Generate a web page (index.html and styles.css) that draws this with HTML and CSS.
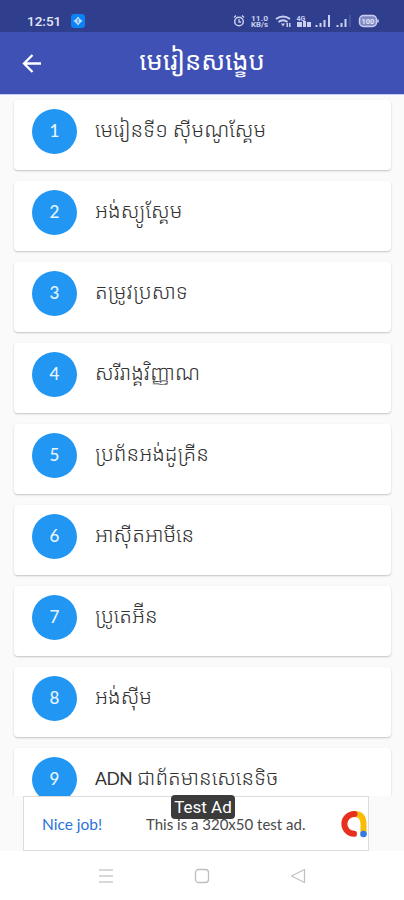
FILE: index.html
```html
<!DOCTYPE html>
<html lang="km">
<head>
<meta charset="UTF-8">
<meta name="viewport" content="width=device-width, initial-scale=1.0">
<title>មេរៀនសង្ខេប</title>
<link rel="stylesheet" href="styles.css">
</head>
<body>
  <div class="status-bar">
    <span class="clock">12:51</span>
    <svg class="app-badge" width="14" height="14" viewBox="0 0 14 14">
      <rect width="14" height="14" rx="3.5" fill="#0b83f7"/>
      <path d="M7 2.500 9 5l2.500 2L9 9l-2 2.500L5 9 2.500 7 5 5z" fill="#b9dcff"/>
      <path d="M7 5v4" stroke="#0b83f7"/>
    </svg>
    <svg class="status-icons" width="148" height="14" viewBox="0 0 148 14" fill="none" stroke="#c9cff0">
      <circle cx="7" cy="7.500" r="4.300" stroke-width="1.500"/>
      <path d="M7 5v3h2M2 3.500 4 1.500M12 3.500 10 1.500" stroke-width="1.300"/>
      <g fill="#c9cff0" stroke="none" class="tiny">
        <text x="19" y="6.500" textLength="17" lengthAdjust="spacingAndGlyphs">11.0</text>
        <text x="19" y="13" textLength="17" lengthAdjust="spacingAndGlyphs">KB/s</text>
        <text x="64.500" y="6.500">4G</text>
      </g>
      <path d="M44 5q7-5 14 0M46.500 8q4.500-3.500 9 0" stroke-width="2"/>
      <path d="m49 9.500 2 3 2-3zM54.500 9h1.500v4h-1.500zM57 9h1.500v4H57zM65 8h5v5h-5zM71 7h3v6h-3zM75 8h4v5h-4z" fill="#c9cff0" stroke="none"/>
      <path d="M84.500 13v-2M88.500 13V9M92.500 13V6M97 13V1" stroke-width="2"/>
      <path d="M105.500 13v-2M109.500 13V9M113.500 13V5" stroke-width="2"/>
      <path d="M118 13V1" stroke-width="1" opacity=".3"/>
      <rect x="127.500" y="1.500" width="17" height="11" rx="4" stroke-width="1.500" fill="#8089c2"/>
      <path d="M146 5.500v3" stroke-width="1.500"/>
      <text x="129.500" y="10" class="charge" fill="#e3e7fc" stroke="none">100</text>
    </svg>
  </div>

  <header class="toolbar">
    <button class="back" aria-label="Back">
      <svg width="20" height="20" viewBox="0 0 20 20" fill="none" stroke="#fff" stroke-width="2.300">
        <path d="M19 10.500H2.500M10.500 2 2 10.500l8.500 8.500"/>
      </svg>
    </button>
    <h1>មេរៀនសង្ខេប</h1>
  </header>

  <main class="lessons">
    <a class="card"><span class="number">1</span><span class="title">មេរៀនទី១ ស៊ីមណូស្គែម</span></a>
    <a class="card"><span class="number">2</span><span class="title">អង់ស្យូស្គែម</span></a>
    <a class="card"><span class="number">3</span><span class="title">តម្រូវប្រសាទ</span></a>
    <a class="card"><span class="number">4</span><span class="title">សរីរាង្គវិញ្ញាណ</span></a>
    <a class="card"><span class="number">5</span><span class="title">ប្រព័នអង់ដូគ្រីន</span></a>
    <a class="card"><span class="number">6</span><span class="title">អាស៊ីតអាមីនេ</span></a>
    <a class="card"><span class="number">7</span><span class="title">ប្រូតេអ&#8204;៊ីន</span></a>
    <a class="card"><span class="number">8</span><span class="title">អង់ស៊ីម</span></a>
    <a class="card"><span class="number">9</span><span class="title"><span class="latin">ADN</span> ជាព័តមានសេនេទិច</span></a>
  </main>

  <div class="ad">
    <span class="ad-label">Test Ad</span>
    <span class="ad-nice">Nice job!</span>
    <span class="ad-text">This is a 320x50 test ad.</span>
    <svg class="ad-logo" width="28" height="28" viewBox="0 0 28 28" fill="none" stroke-width="6" stroke-linecap="round">
      <path d="M14.500 4Q23.500 4 23.500 14v8" stroke="#fbbc04"/>
      <path d="M14.500 4a9.900 9.900 0 0 0-.5 19.800" stroke="#e8301f"/>
      <circle cx="23.500" cy="24" r="3.300" fill="#3478e5"/>
    </svg>
  </div>

  <nav class="nav-bar">
    <svg width="16" height="16" viewBox="0 0 16 16" fill="none" stroke="#cbcbcb" stroke-width="1.500">
      <path d="M1 2h14M1 8h14M1 14h14"/>
    </svg>
    <svg width="16" height="16" viewBox="0 0 16 16" fill="none" stroke="#bebebe" stroke-width="1.300">
      <rect x="1.500" y="1.500" width="13" height="13" rx="3"/>
    </svg>
    <svg width="16" height="16" viewBox="0 0 16 16" fill="none" stroke="#c2c2c2" stroke-width="1.300" stroke-linejoin="round">
      <path d="M14.500 1.500v13L1.500 8z"/>
    </svg>
  </nav>
</body>
</html>
```

FILE: styles.css
```css
:root {
  --primary-color: #3f51b5;
  --primary-dark: #303f8d;
  --accent-color: #2196f3;
  --khmer: "Noto Sans Khmer", "Khmer OS", sans-serif;
}

* {
  box-sizing: border-box;
}

body {
  margin: 0;
  height: 900px;
  display: flex;
  flex-direction: column;
  overflow: hidden;
  background: #fafafa;
  font-family: Roboto, var(--khmer);
}

.status-bar {
  flex: none;
  height: 32px;
  display: flex;
  align-items: center;
  padding: 9px 24px 0 27px;
  background: var(--primary-dark);
  color: #e4e7f7;
}

.clock {
  font-size: 13.5px;
  font-weight: 500;
  line-height: 14px;
}

.app-badge {
  margin-left: 10px;
}

.status-icons {
  margin-left: auto;
}

.tiny {
  font-size: 7px;
  font-weight: 700;
}

.charge {
  font-size: 7.5px;
  font-weight: 700;
}

.toolbar {
  flex: none;
  height: 63px;
  display: grid;
  grid-template-columns: 64px 1fr 64px;
  align-items: center;
  background: var(--primary-color);
  border-bottom: 1px solid #c5caf0;
}

.back {
  margin: 0 0 0 22px;
  padding: 0;
  width: 20px;
  height: 20px;
  border: none;
  background: none;
}

.back svg {
  display: block;
}

h1 {
  margin: 0;
  color: #fff;
  font-size: 25.6px;
  font-weight: 400;
  line-height: 58px;
  height: 62px;
  text-align: center;
  white-space: nowrap;
}

.lessons {
  flex: 1;
  min-height: 0;
  overflow: hidden;
  display: flex;
  flex-direction: column;
  gap: 11px;
  padding: 5px 13px 0 14px;
}

.card {
  flex: none;
  height: 70px;
  display: flex;
  align-items: flex-start;
  gap: 18px;
  padding: 9.4px 18px;
  background: #fff;
  border-radius: 4px;
  box-shadow: 0 1px 2px rgba(0, 0, 0, 0.22);
}

.number {
  flex: none;
  width: 45px;
  height: 45px;
  border-radius: 50%;
  background: var(--accent-color);
  color: #e8f5ff;
  font-family: Lato, sans-serif;
  font-size: 17px;
  font-weight: 500;
  line-height: 44px;
  text-align: center;
}

.title {
  color: #333;
  font-size: 20.6px;
  font-weight: 300;
  line-height: 43px;
  white-space: nowrap;
}

.latin {
  font-family: Lato, sans-serif;
  font-size: 17.5px;
  font-weight: 400;
  letter-spacing: -0.4px;
}

.ad {
  flex: none;
  position: relative;
  width: 346px;
  height: 55px;
  margin-left: 23px;
  display: flex;
  align-items: center;
  padding: 0 0 0 18px;
  background: #fff;
  border: 1px solid #dcdcdc;
}

.ad-nice,
.ad-text {
  font-family: Lato, sans-serif;
  font-size: 15px;
  white-space: nowrap;
}

.ad-nice {
  width: 104px;
  color: #2a73dc;
  font-size: 15.5px;
}

.ad-text {
  color: #4a4a4a;
}

.ad-logo {
  margin-left: auto;
}

.ad-label {
  position: absolute;
  top: -2px;
  left: 147px;
  width: 64px;
  height: 24px;
  border-radius: 4px;
  background: #3b3b3b;
  color: #fff;
  font-size: 17px;
  line-height: 24px;
  text-align: center;
  white-space: nowrap;
}

.nav-bar {
  flex: none;
  height: 49px;
  display: flex;
  justify-content: center;
  align-items: center;
  gap: 80px;
  background: #fff;
}
```
